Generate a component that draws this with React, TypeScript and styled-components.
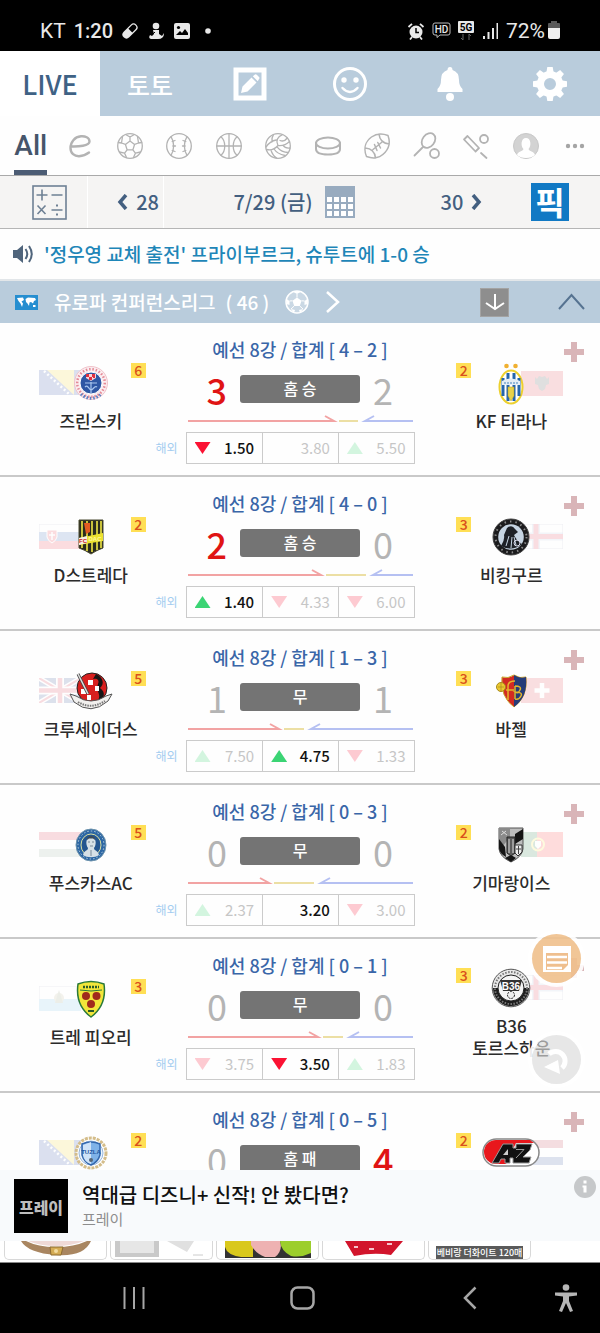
import React from 'react';
import styled, { createGlobalStyle } from 'styled-components';

const GlobalStyle = createGlobalStyle`
  * { box-sizing: border-box; }
  body { margin: 0; background: #000; font-family: 'Noto Sans CJK KR', 'Noto Sans', sans-serif; }
  button { font: inherit; color: inherit; background: none; border: 0; padding: 0; cursor: pointer; }
  h1, h2, p { margin: 0; font: inherit; }
  svg { display: block; flex: none; }
`;

/* ---------- shell ---------- */

const Screen = styled.div`
  display: flex;
  flex-direction: column;
  height: 100vh;
  background: #fefefe;
`;

const StatusBar = styled.header`
  flex: none;
  display: flex;
  justify-content: space-between;
  align-items: center;
  height: 51px;
  padding: 10px 39px 0 40px;
  background: #000;
  color: #e8e8e8;
  font: 21px/24px Roboto, sans-serif;
`;

const StatusGroup = styled.div<{ $gap: number }>`
  display: flex;
  align-items: center;
  gap: ${(p) => p.$gap}px;
`;

const Clock = styled.time`
  font-size: 20px;
  font-weight: 500;
`;

const MainNav = styled.nav`
  flex: none;
  display: grid;
  grid-template-columns: repeat(6, 1fr);
  height: 65px;
  background: #b9ccdc;
`;

const NavTab = styled.button<{ $active?: boolean }>`
  display: flex;
  align-items: center;
  justify-content: center;
  font-size: ${(p) => (p.$active ? 27 : 25)}px;
  font-weight: 500;
  line-height: 32px;
  color: ${(p) => (p.$active ? '#3f6285' : '#fff')};
  background: ${(p) => (p.$active ? '#fff' : 'transparent')};
`;

const SportNav = styled.nav`
  flex: none;
  display: grid;
  grid-template-columns: repeat(12, 1fr);
  height: 60px;
  padding-left: 6px;
  border-bottom: 1px solid #a9a9a9;
`;

const SportTab = styled.button<{ $active?: boolean }>`
  display: flex;
  align-items: center;
  justify-content: center;
  color: ${(p) => (p.$active ? '#46556b' : '#b3b3b3')};
`;

const AllLabel = styled.span`
  height: 59px;
  padding-top: 2px;
  font-family: Roboto, sans-serif;
  font-size: 28px;
  font-weight: 500;
  line-height: 56px;
  border-bottom: 5px solid #4c5c74;
`;

const DateBar = styled.section`
  flex: none;
  display: grid;
  grid-template-columns: 88px 76px 1fr 76px 100px;
  height: 53px;
  background: #f5f4f3;
  border-bottom: 1px solid #b5b5b5;
  color: #435f80;
  font-size: 20px;
  font-weight: 500;
  line-height: 28px;
`;

const DateCell = styled.button<{ $align?: string; $pad?: string; $line?: boolean }>`
  display: flex;
  align-items: center;
  justify-content: ${(p) => p.$align || 'center'};
  gap: 8px;
  padding: ${(p) => p.$pad || '0'};
  border-right: ${(p) => (p.$line ? '1px solid #fff' : '0')};
`;

const DateMain = styled(DateCell)`
  gap: 12px;
`;

const PickBadge = styled.span`
  width: 38px;
  height: 38px;
  background: #1179c4;
  color: #fff;
  font-size: 32px;
  font-weight: 700;
  line-height: 37px;
  text-align: center;
`;

const News = styled.a`
  flex: none;
  display: flex;
  align-items: center;
  gap: 10px;
  height: 52px;
  padding: 0 12px;
  border-bottom: 2px solid #e2e6e9;
  color: #1e86b8;
  font-size: 19px;
  font-weight: 500;
  line-height: 28px;
  text-decoration: none;
  white-space: nowrap;
`;

const LeagueBar = styled.section`
  flex: none;
  display: flex;
  align-items: center;
  height: 42px;
  padding: 0 15px;
  background: #b9ccdc;
  color: #fff;
`;

const LeagueName = styled.h2`
  margin: 0 10px 0 16px;
  font-size: 19px;
  font-weight: 500;
  line-height: 28px;
`;

const LeagueCount = styled.span`
  margin-right: 16px;
  font-size: 19px;
  font-weight: 500;
  line-height: 28px;
`;

const LeagueTools = styled.div`
  display: flex;
  align-items: center;
  gap: 49px;
  margin-left: auto;
`;

const SaveBox = styled.button`
  display: grid;
  place-items: center;
  width: 29px;
  height: 29px;
  background: #8e8e8e;
  border: 1px solid #a3a3a3;
`;

/* ---------- matches ---------- */

const ListWrap = styled.main`
  position: relative;
  flex: 1;
  min-height: 0;
`;

const MatchList = styled.div`
  height: 100%;
  overflow-y: auto;
  scrollbar-width: none;
`;

const MatchRow = styled.article`
  display: grid;
  grid-template-columns: 1fr 229px 1fr;
  grid-template-rows: 109px 32px;
  padding-bottom: 11px;
  border-bottom: 2px solid #c9c9c9;
`;

const TeamCell = styled.div<{ $side: 'home' | 'away' }>`
  grid-row: 1 / 3;
  grid-column: ${(p) => (p.$side === 'home' ? 1 : 3)};
  display: flex;
  flex-direction: column;
  align-items: center;
  justify-content: center;
  gap: 7px;
  padding: ${(p) => (p.$side === 'home' ? '7px 4px 0 0' : '7px 0 0 8px')};
`;

const LogoBox = styled.div`
  position: relative;
  display: grid;
  align-items: center;
  width: 104px;
  height: 40px;
  > * { grid-area: 1 / 1; }
`;

const FlagBox = styled.div<{ $side: 'home' | 'away' }>`
  justify-self: ${(p) => (p.$side === 'home' ? 'start' : 'end')};
  opacity: 0.15;
`;

const CrestBox = styled.div`
  justify-self: center;
  z-index: 1;
`;

const Rank = styled.span<{ $side: 'home' | 'away' }>`
  position: absolute;
  top: 0;
  ${(p) => (p.$side === 'home' ? 'right' : 'left')}: -3px;
  width: 15px;
  height: 15px;
  background: #ffdf55;
  color: #d9501c;
  font-size: 14px;
  font-weight: 500;
  line-height: 15px;
  text-align: center;
`;

const TeamName = styled.p`
  min-height: 22px;
  color: #2b2b2b;
  font-size: 17px;
  font-weight: 500;
  line-height: 22px;
  text-align: center;
  white-space: pre-line;
`;

const Centre = styled.div`
  grid-row: 1;
  grid-column: 2;
  display: flex;
  flex-direction: column;
  padding-top: 12px;
`;

const Stage = styled.p`
  margin-bottom: 8px;
  color: #3a66a8;
  font-size: 18px;
  font-weight: 500;
  line-height: 28px;
  text-align: center;
  white-space: nowrap;
`;

const ScoreLine = styled.div`
  display: grid;
  grid-template-columns: 1fr 120px 1fr;
  gap: 13px;
  align-items: center;
  margin-bottom: 6px;
`;

const Score = styled.span<{ $win?: boolean; $side: 'home' | 'away' }>`
  color: ${(p) => (p.$win ? '#e01414' : '#b4b4b4')};
  font-size: 36px;
  font-weight: ${(p) => (p.$win ? 500 : 400)};
  line-height: 36px;
  text-align: ${(p) => (p.$side === 'home' ? 'right' : 'left')};
`;

const Result = styled.span`
  height: 28px;
  border-radius: 3px;
  background: #747474;
  color: #fff;
  font-size: 16px;
  font-weight: 500;
  line-height: 27px;
  text-align: center;
`;

const OverseasLabel = styled.span`
  grid-row: 2;
  grid-column: 1;
  justify-self: end;
  align-self: center;
  margin-right: 8px;
  color: #a4cdf0;
  font-size: 12px;
  line-height: 16px;
`;

const Odds = styled.div`
  grid-row: 2;
  grid-column: 2;
  display: grid;
  grid-template-columns: repeat(3, 1fr);
  border: 1px solid #cbcbcb;
`;

const Odd = styled.button<{ $on: boolean }>`
  display: flex;
  align-items: center;
  justify-content: space-between;
  padding: 0 8px;
  color: ${(p) => (p.$on ? '#111' : '#c6c6c6')};
  font-size: 15px;
  font-weight: ${(p) => (p.$on ? 500 : 400)};
  line-height: 20px;
  & + & { border-left: 1px solid #cbcbcb; }
`;

const Trend = styled.i<{ $dir: '' | 'up' | 'down'; $on: boolean }>`
  width: 16px;
  height: 12px;
  background: ${(p) => (p.$dir === 'up' ? '#3bd474' : p.$dir === 'down' ? '#fb1233' : 'transparent')};
  opacity: ${(p) => (p.$on ? 1 : 0.22)};
  clip-path: ${(p) => (p.$dir === 'up' ? 'polygon(50% 0, 100% 100%, 0 100%)' : 'polygon(0 0, 100% 0, 50% 100%)')};
`;

const AddButton = styled.button`
  grid-row: 1 / 3;
  grid-column: 3;
  justify-self: end;
  align-self: start;
  margin: 18px 15px 0 0;
`;

const Floating = styled.div`
  position: absolute;
  right: 19px;
  bottom: 86px;
  z-index: 2;
  display: flex;
  flex-direction: column;
  gap: 52px;
`;

const RoundButton = styled.button<{ $tone: string }>`
  display: grid;
  place-items: center;
  width: 49px;
  height: 49px;
  border-radius: 50%;
  background: ${(p) => p.$tone};
  box-shadow: 0 0 0 4px rgba(255, 255, 255, 0.9);
`;

/* ---------- bottom ---------- */

const AdBanner = styled.aside`
  flex: none;
  display: flex;
  align-items: center;
  gap: 14px;
  height: 71px;
  padding: 0 4px 0 14px;
  background: #f8fafc;
`;

const AdLogo = styled.span`
  width: 54px;
  height: 54px;
  background: #000;
  color: #bdbdbd;
  font-size: 16px;
  font-weight: 900;
  line-height: 56px;
  text-align: center;
`;

const AdText = styled.div`
  flex: 1;
`;

const AdTitle = styled.p`
  color: #101010;
  font-size: 20px;
  font-weight: 500;
  line-height: 26px;
`;

const AdBrand = styled.p`
  color: #8d8d8d;
  font-size: 15px;
  line-height: 22px;
`;

const AdInfo = styled.button`
  align-self: flex-start;
  margin-top: 6px;
`;

const Products = styled.section`
  flex: none;
  display: flex;
  gap: 3px;
  height: 22px;
  padding: 0 4px 2px;
  border-bottom: 1px solid #888;
  background: #fff;
  overflow: hidden;
`;

const Product = styled.a`
  display: flex;
  justify-content: center;
  flex: 0 1 103px;
  height: 19px;
  border: 1px solid #d8d8d8;
  border-top: 0;
  border-radius: 0 0 5px 5px;
  overflow: hidden;
  text-decoration: none;
`;

const ProductTag = styled.span`
  align-self: flex-end;
  padding: 0 1px;
  background: #5a5a5a;
  color: #fff;
  font-size: 9px;
  font-weight: 500;
  line-height: 13px;
  white-space: nowrap;
`;

const SystemNav = styled.nav`
  flex: none;
  display: grid;
  grid-template-columns: repeat(3, 1fr) 46px;
  height: 70px;
  padding-left: 50px;
  background: #000;
`;

const SystemButton = styled.button<{ $start?: boolean }>`
  display: flex;
  align-items: center;
  justify-content: ${(p) => (p.$start ? 'flex-start' : 'center')};
`;

/* ---------- sport icons ---------- */

const SportIcon = ({ children, width = 1.3 }: { children: React.ReactNode; width?: number }) => (
  <svg width="28" height="28" viewBox="0 0 28 28" fill="none" stroke="currentColor" strokeWidth={width} strokeLinecap="round" strokeLinejoin="round">
    {children}
  </svg>
);

const sports: { name: string; icon: React.ReactNode }[] = [
  { name: 'e스포츠', icon: <SportIcon width={2.4}><path d="M5 14.500 C12 14.800 23.500 14 23.500 9.500 C23.500 5.500 19 4 15 4.300 C8.500 5 4.500 10 4.500 16 C4.500 21.500 8.500 24.300 13 24.200 C17 24 20.500 22.500 23 20.500" /></SportIcon> },
  { name: '축구', icon: <SportIcon><circle cx="14" cy="14" r="12.300" /><path d="M14 9 L18.600 12.400 L16.900 17.800 H11.100 L9.400 12.400 Z M14 9 V5 M18.600 12.400 L22.500 11 M16.900 17.800 L19.400 21.200 M11.100 17.800 L8.600 21.200 M9.400 12.400 L5.500 11 M10 2.700 L14 5 L18 2.700 M25.600 10.500 L22.500 11 L21.500 4.500 M19.400 21.200 L24.500 20 M19.400 21.200 L17.500 25.600 M8.600 21.200 L3.500 20 M8.600 21.200 L10.500 25.600 M2.400 10.500 L5.500 11 L6.500 4.500" /></SportIcon> },
  { name: '야구', icon: <SportIcon><circle cx="14" cy="14" r="12.300" /><path d="M6 4.700 C9.500 10 9.500 18 6 23.300 M22 4.700 C18.500 10 18.500 18 22 23.300" /><path d="M7.200 9.500 L10 8.500 M7.800 14 H10.500 M7.200 18.500 L10 19.500 M20.800 9.500 L18 8.500 M20.200 14 H17.500 M20.800 18.500 L18 19.500" /></SportIcon> },
  { name: '농구', icon: <SportIcon><circle cx="14" cy="14" r="12.300" /><path d="M14 1.700 V26.300 M1.700 14 H26.300 M6 4.700 C11 9 11 19 6 23.300 M22 4.700 C17 9 17 19 22 23.300" /></SportIcon> },
  { name: '배구', icon: <SportIcon><circle cx="14" cy="14" r="12.300" /><path d="M14 13.500 C11.500 9 13.500 4.500 18.500 2.600 M14 13.500 C19 14 23 12 25.500 9.500 M14 13.500 C11 17 6.500 18.500 2.600 17.500 M16 8.500 C18.500 9.500 21.500 8.500 23.300 6 M12.200 8 C8 8.500 4.500 11.500 2 15 M9.500 2.700 C8 5 7.500 7.500 8 10 M10 17 C12 20 16 22.500 21 23.500 M13 14.800 C16 18.500 20 20.500 24.300 20.500 M19 13.400 C20.500 15.500 23 16.500 26 16 M7 18.200 C8 21.500 10 24.500 13 26.200" /></SportIcon> },
  { name: '아이스하키', icon: <SportIcon width={2}><ellipse cx="14" cy="11" rx="12" ry="5.500" /><path d="M2 11 V17 C2 20.500 7 22.500 14 22.500 S26 20.500 26 17 V11" /></SportIcon> },
  { name: '미식축구', icon: <SportIcon width={1.5}><path d="M3.500 24.500 C0 16 3 9 8.500 5 C14 1 20 1.500 25 3.500 C27 9 27 15 22 20.500 C17 26 10 27 3.500 24.500 Z M16 1.900 C16.500 7.500 20 11.500 26.200 12 M2.200 16 C8.500 16.500 12 20.500 12.500 26 M10 17.500 L18.500 10.500 M11.500 12.500 L14 18.500 M14.800 10.500 L17.500 16" /></SportIcon> },
  { name: '테니스', icon: <SportIcon width={1.8}><ellipse cx="15.500" cy="8.500" rx="6" ry="8" transform="rotate(38 15.500 8.500)" /><path d="M10 15 L1.500 23.500" /><circle cx="21.500" cy="21.500" r="4.500" /></SportIcon> },
  { name: '크리켓', icon: <SportIcon width={1.8}><path d="M2 7.500 L5.500 4 L17 16 L13.500 19.500 Z M19 21 L24.500 26" /><circle cx="22" cy="7" r="4" /></SportIcon> },
  { name: '선수', icon: (
    <svg width="28" height="28" viewBox="0 0 28 28"><circle cx="14" cy="14" r="12.500" fill="#d3d3d3" stroke="#c8c8c8" /><path d="M5 23 C6 19 11 19.500 11.500 17 C8.500 14 8.800 6 14 6 S19.500 14 16.500 17 C17 19.500 22 19 23 23 C19 27 9 27 5 23 Z" fill="#fff" /></svg>
  ) },
  { name: '더보기', icon: <svg width="20" height="6" viewBox="0 0 20 6" fill="#a5a5a5"><circle cx="3" cy="3" r="2.200" /><circle cx="10" cy="3" r="2.200" /><circle cx="17" cy="3" r="2.200" /></svg> },
];

/* ---------- flags ---------- */

const flagArt: Record<string, React.ReactNode> = {
  bosnia: <><path fill="#1c3f9e" d="M0 0H42V25H0Z" /><path fill="#f7d417" d="M8 0H35V25Z" /><path d="M5 1 L30 24" stroke="#fff" strokeWidth="2.500" strokeDasharray="2 2.500" /></>,
  slovakia: <><path fill="#fff" stroke="#99b" d="M0 0H42V9H0Z" /><path fill="#2b5cb0" d="M0 8H42V17H0Z" /><path fill="#ee2436" d="M0 17H42V25H0Z" /><path fill="#ee2436" stroke="#fff" d="M8 6H18V13Q17 17 13 19Q9 17 8 13Z" /><path d="M13 8V16M10 11H16" stroke="#fff" strokeWidth="1.500" /></>,
  uk: <><path fill="#20408c" d="M0 0H42V25H0Z" /><path d="M0 0L42 25M42 0L0 25" stroke="#fff" strokeWidth="5" /><path d="M0 0L42 25M42 0L0 25" stroke="#d8203a" strokeWidth="2" /><path d="M21 0V25M0 12.500H42" stroke="#fff" strokeWidth="8" /><path d="M21 0V25M0 12.500H42" stroke="#d8203a" strokeWidth="4.500" /></>,
  hungary: <><path fill="#fff" d="M0 0H42V25H0Z" /><path fill="#d8203a" d="M0 0H42V8H0Z" /><path fill="#477050" d="M0 17H42V25H0Z" opacity=".6" /></>,
  sanmarino: <><path fill="#fff" stroke="#99b" d="M0 0H42V25H0Z" /><path fill="#6fbfe8" d="M0 13H42V25H0Z" /><circle cx="20" cy="12" r="5" fill="#b7b08a" /><path d="M16 17H24L20 4Z" fill="#8a9a70" /></>,
  albania: <><path fill="#e0303a" d="M0 0H42V25H0Z" /><path fill="#333" d="M21 6L18 5 16 8 14 6 14 13 17 14 18 18 21 20 24 18 25 14 28 13 28 6 26 8 24 5Z" /></>,
  faroe: <><path fill="#fff" stroke="#99b" d="M0 0H42V25H0Z" /><path d="M15 0V25M0 12.500H42" stroke="#3a6ab0" strokeWidth="8" opacity=".4" /><path d="M15 0V25M0 12.500H42" stroke="#e02840" strokeWidth="5" /></>,
  swiss: <><path fill="#e0303a" d="M0 0H42V25H0Z" /><path d="M21 5V20M13.500 12.500H28.500" stroke="#fff" strokeWidth="4.500" /></>,
  portugal: <><path fill="#ff2020" d="M0 0H42V25H0Z" /><path fill="#187038" d="M0 0H16V25H0Z" /><circle cx="17" cy="12.500" r="6" fill="none" stroke="#ffe830" strokeWidth="2" /><path fill="#fff" d="M14 9H20V14L17 17L14 14Z" /></>,
  netherlands: <><path fill="#fff" d="M0 0H42V25H0Z" /><path fill="#c0283a" d="M0 0H42V8H0Z" /><path fill="#2b4a9a" d="M0 17H42V25H0Z" /></>,
};

const Flag = ({ name }: { name: string }) => (
  <svg width="42" height="25" viewBox="0 0 42 25" fill="none" stroke="none">{flagArt[name]}</svg>
);

/* ---------- club crests ---------- */

const tiny = { fontFamily: 'Liberation Sans, sans-serif', fontWeight: 700, textAnchor: 'middle' as const };

const crestArt: Record<string, React.ReactNode> = {
  zrinjski: (
    <svg width="36" height="36" viewBox="0 0 36 36">
      <circle cx="18" cy="18" r="16.500" fill="#fbeef1" stroke="#f0c3ca" />
      <circle cx="18" cy="18" r="13.800" fill="none" stroke="#e48a96" strokeWidth="2.500" strokeDasharray="1.500 1.800" />
      <path d="M8 29 A14 14 0 0 0 28 29" fill="none" stroke="#5a7fc4" strokeWidth="3" strokeDasharray="1.500 1.800" />
      <circle cx="18" cy="18" r="11" fill="#2e57a4" stroke="#fff" />
      <path d="M13 9H23V13L18 16L13 13Z" fill="#f5d5da" /><path d="M13 9h3v3h-3zM19 9h3v3h-3zM16 12h3v3h-3zM20 12h2v1h-2z" fill="#e03040" />
      <path d="M12 18H24M12 22C15 19 16 25 18 25S22 20 24 22M18 17V28" stroke="#a9c7f0" fill="none" strokeWidth="1.200" />
    </svg>
  ),
  dac: (
    <svg width="26" height="36" viewBox="0 0 26 36">
      <path d="M1 1H25V29Q19 31 13 35Q7 31 1 29Z" fill="#2a2b1e" stroke="#4a4a30" />
      <path d="M4 2V29M9 2V32M14 2V33M19 2V31M23 2V29" stroke="#c9c23c" strokeWidth="2" />
      <path d="M6 4H12V13L8 15Z" fill="#e35a22" />
      <path d="M1 19L25 14V22L1 26Z" fill="#ece22e" /><path d="M1 19L9 17V24L1 26Z" fill="#f6f0e4" />
      <text x="5" y="24" fontSize="6" fill="#c22" {...tiny}>FC</text><text x="17" y="22" fontSize="6" fill="#fff7a0" {...tiny}>DAC</text>
    </svg>
  ),
  crusaders: (
    <svg width="44" height="38" viewBox="0 0 44 38">
      <circle cx="23" cy="16" r="15" fill="#d8201f" stroke="#222" />
      <path d="M27 2C34 5 36 12 31 16C37 20 36 27 28 30C34 22 26 20 29 12C31 7 27 6 24 7Z" fill="#161616" />
      <path d="M12 17h5v5h-5zM19 8h5v5h-5zM26 14h4v5h-4zM18 23h4v5h-4z" fill="#fff" />
      <path d="M9 2L19 22" stroke="#444" strokeWidth="3" /><path d="M9 2L19 22" stroke="#ddd" strokeWidth="1.500" />
      <path d="M1 22L7 24Q22 34 37 24L43 22L39 29Q22 44 5 30Z" fill="#f2f0ee" stroke="#555" /><path d="M9 30Q22 38 36 29" fill="none" stroke="#777" strokeWidth="2" strokeDasharray="1.500 1" />
    </svg>
  ),
  puskas: (
    <svg width="32" height="34" viewBox="0 0 32 34">
      <ellipse cx="16" cy="17" rx="15" ry="16" fill="#2d67a4" stroke="#6f94ad" /><ellipse cx="16" cy="17" rx="13" ry="14" fill="none" stroke="#b8cfdf" strokeDasharray="1.500 2" />
      <ellipse cx="16" cy="17" rx="10" ry="11" fill="#23558f" stroke="#d9dfa0" />
      <path d="M8 27C9 22 13 23 13 20C10 16 11 9 16 9S22 16 19 20C19 23 23 22 24 27C20 30 12 30 8 27Z" fill="#d6e0e6" /><path d="M12 12Q12 8 16 8T20 12L18 10.500H14Z" fill="#3a4a58" /><path d="M13 14h2M17 14h2M15 18h3M16 22V28" stroke="#7a8a98" />
    </svg>
  ),
  trefiori: (
    <svg width="30" height="38" viewBox="0 0 30 38">
      <path d="M2 4Q15 -1 28 4Q31 25 15 37Q-1 25 2 4Z" fill="#f2e63a" stroke="#2a7a3a" strokeWidth="1.500" />
      <path d="M4 10Q15 12 26 10" stroke="#2a7a3a" fill="none" /><path d="M7 7H23" stroke="#2a5a2a" strokeWidth="2.500" strokeDasharray="2 1" />
      <circle cx="10" cy="16" r="4" fill="#a02a1c" /><circle cx="20.500" cy="16" r="4" fill="#a02a1c" /><circle cx="15" cy="24" r="4" fill="#a02a1c" />
      <path d="M12 31H18" stroke="#2a5a2a" strokeWidth="2" />
    </svg>
  ),
  tuzla: (
    <svg width="34" height="34" viewBox="0 0 34 34">
      <circle cx="17" cy="17" r="15" fill="#fff" stroke="#d4bd8a" strokeWidth="3" strokeDasharray="3 1" />
      <circle cx="17" cy="17" r="12" fill="#eef4fb" stroke="#9ab8dc" />
      <path d="M8 8Q17 4 26 8V19Q24 26 17 29Q10 26 8 19Z" fill="#7fb2e8" stroke="#3468ae" strokeWidth="1.500" /><path d="M17 6V28Q10 26 9 19V9Z" fill="#cfe3f8" />
      <text x="17" y="18" fontSize="6" fill="#2457a0" {...tiny}>TUZLA</text><circle cx="17" cy="24" r="2" fill="#567" />
    </svg>
  ),
  tirana: (
    <svg width="26" height="42" viewBox="0 0 26 42">
      <circle cx="8.500" cy="3" r="2.300" fill="#f0b030" /><circle cx="17.500" cy="3" r="2.300" fill="#f0b030" />
      <ellipse cx="13" cy="24" rx="11.500" ry="16.500" fill="#fff" stroke="#ecd02e" strokeWidth="2" />
      <path d="M5 15V33M10 10V38M16 10V38M21 15V33" stroke="#2566ac" strokeWidth="3" /><path d="M4 18Q13 13 22 18V22H4Z" fill="#e3edf5" /><path d="M6 20H20" stroke="#7aa6d0" strokeDasharray="2 1" strokeWidth="1.500" />
      <path d="M10 24H16V33L13 38L10 33Z" fill="#e8d24a" stroke="#b59b20" strokeWidth=".5" />
    </svg>
  ),
  vikingur: (
    <svg width="38" height="38" viewBox="0 0 38 38">
      <circle cx="19" cy="19" r="18" fill="#1b1b1d" stroke="#444" /><circle cx="19" cy="19" r="15.500" fill="none" stroke="#8a8a8a" strokeWidth="2" strokeDasharray="1.500 4" />
      <circle cx="19" cy="19" r="12.800" fill="#c6d4e2" />
      <path d="M9 28Q13 22 12 17L15 10Q20 6 23 11L26 14L22 17Q24 22 30 26Q20 34 9 28Z" fill="#1d2026" /><path d="M14 28L17 18M19 30L20 19M24 27L22 19" stroke="#c6d4e2" strokeWidth="1" /><circle cx="25" cy="25" r="3" fill="none" stroke="#dde" />
    </svg>
  ),
  basel: (
    <svg width="34" height="34" viewBox="0 0 34 34">
      <path d="M8 3Q14 5 20 1Q26 5 32 3Q34 23 20 33Q6 23 8 3Z" fill="#d22a22" stroke="#c9a82e" /><path d="M20 1Q26 5 32 3Q34 23 20 33Z" fill="#263c78" />
      <path d="M14 26V12Q14 7 21 7M12 16H20M21 12V25M21 12Q28 12 26 16T21 18Q29 18 27 22T21 25" fill="none" stroke="#e3b52d" strokeWidth="1.500" />
      <circle cx="7" cy="13" r="4.500" fill="#ecc92f" stroke="#a78a20" /><path d="M4 13H10M7 9V17" stroke="#a78a20" strokeWidth=".7" />
    </svg>
  ),
  guimaraes: (
    <svg width="26" height="36" viewBox="0 0 26 36">
      <path d="M1 1H25V22Q24 30 13 35Q2 30 1 22Z" fill="#bdbdbd" stroke="#555" /><path d="M1 1H12V10L1 24Z" fill="#8a8a8a" /><path d="M1 12L7 20 8 30Q1 26 1 21ZM25 2V12L17 17V7ZM7 31L13 28 18 31 13 35Z" fill="#151515" />
      <path d="M9 10H17V26L13 29L9 26Z" fill="#5d5d5d" stroke="#222" /><path d="M11 12V26M15 12V26M4 4L9 8M3 8L8 4" stroke="#ddd" /><path d="M17 18H24V25L20 29L17 26Z" fill="#eee" stroke="#333" /><path d="M20.500 19V27M18 22H23" stroke="#444" />
    </svg>
  ),
  b36: (
    <svg width="40" height="40" viewBox="0 0 40 40">
      <circle cx="20" cy="20" r="18.800" fill="#e8e8e8" stroke="#555" /><path d="M2 20A18 18 0 0 0 38 20Z" fill="#1d1d1d" /><circle cx="20" cy="20" r="16" fill="none" stroke="#777" strokeWidth="2" strokeDasharray="1.500 1.500" />
      <circle cx="20" cy="20" r="13" fill="#f5f5f5" stroke="#222" /><path d="M9 12H31L28 23H12Z" fill="#333" /><text x="20" y="21.500" fontSize="10" fill="#fff" {...tiny}>B36</text><circle cx="20" cy="27" r="3.500" fill="#eee" stroke="#222" strokeDasharray="2 1" />
    </svg>
  ),
  az: (
    <svg width="58" height="30" viewBox="0 0 58 30">
      <rect x="1" y="1" width="56" height="27" rx="13.500" fill="#fff" stroke="#888" strokeWidth="1.500" /><path d="M14 2H48L52 5H34L24 26H14A12 12 0 0 1 14 2Z" fill="#e8171c" />
      <path d="M10 25L21 6H31V10H34V6H50L48 12L41 19H49L47 25H31V20H28V25H23V21H19L17 25Z" fill="#111" stroke="#999" strokeWidth="1" /><path d="M21 17L26 11V17Z" fill="#ccc" /><path d="M34 11.500H42L34 20" fill="none" stroke="#999" />
    </svg>
  ),
};

/* ---------- data ---------- */

type Team = { name?: string; flag: string; crest: string; rank: number; score: number; win?: boolean };
type OddItem = { dir: '' | 'up' | 'down'; value: string; on?: boolean };
type Match = { id: number; total: string; result: string; home: Team; away: Team; bar?: [number, number]; odds?: OddItem[] };

const matches: Match[] = [
  {
    id: 1, total: '4 – 2', result: '홈 승', bar: [148, 175],
    home: { name: '즈린스키', flag: 'bosnia', crest: 'zrinjski', rank: 6, score: 3, win: true },
    away: { name: 'KF 티라나', flag: 'albania', crest: 'tirana', rank: 2, score: 2 },
    odds: [{ dir: 'down', value: '1.50', on: true }, { dir: '', value: '3.80' }, { dir: 'up', value: '5.50' }],
  },
  {
    id: 2, total: '4 – 0', result: '홈 승', bar: [135, 183],
    home: { name: 'D스트레다', flag: 'slovakia', crest: 'dac', rank: 2, score: 2, win: true },
    away: { name: '비킹구르', flag: 'faroe', crest: 'vikingur', rank: 3, score: 0 },
    odds: [{ dir: 'up', value: '1.40', on: true }, { dir: 'down', value: '4.33' }, { dir: 'down', value: '6.00' }],
  },
  {
    id: 3, total: '1 – 3', result: '무', bar: [93, 121],
    home: { name: '크루세이더스', flag: 'uk', crest: 'crusaders', rank: 5, score: 1 },
    away: { name: '바젤', flag: 'swiss', crest: 'basel', rank: 3, score: 1 },
    odds: [{ dir: 'up', value: '7.50' }, { dir: 'up', value: '4.75', on: true }, { dir: 'down', value: '1.33' }],
  },
  {
    id: 4, total: '0 – 3', result: '무', bar: [83, 131],
    home: { name: '푸스카스AC', flag: 'hungary', crest: 'puskas', rank: 5, score: 0 },
    away: { name: '기마랑이스', flag: 'portugal', crest: 'guimaraes', rank: 2, score: 0 },
    odds: [{ dir: 'up', value: '2.37' }, { dir: '', value: '3.20', on: true }, { dir: 'down', value: '3.00' }],
  },
  {
    id: 5, total: '0 – 1', result: '무', bar: [132, 160],
    home: { name: '트레 피오리', flag: 'sanmarino', crest: 'trefiori', rank: 3, score: 0 },
    away: { name: 'B36\n토르스하운', flag: 'faroe', crest: 'b36', rank: 3, score: 0 },
    odds: [{ dir: 'down', value: '3.75' }, { dir: 'down', value: '3.50', on: true }, { dir: 'up', value: '1.83' }],
  },
  {
    id: 6, total: '0 – 5', result: '홈 패',
    home: { flag: 'bosnia', crest: 'tuzla', rank: 2, score: 0 },
    away: { flag: 'netherlands', crest: 'az', rank: 2, score: 4, win: true },
  },
];

const TeamBlock = ({ team, side }: { team: Team; side: 'home' | 'away' }) => (
  <TeamCell $side={side}>
    <LogoBox>
      <FlagBox $side={side}><Flag name={team.flag} /></FlagBox>
      <CrestBox>{crestArt[team.crest]}</CrestBox>
      <Rank $side={side}>{team.rank}</Rank>
    </LogoBox>
    <TeamName>{team.name}</TeamName>
  </TeamCell>
);

/* Win / draw / loss shares as a red arrow, a yellow bar and a blue arrow */
const ShareBar = ({ bar: [red, blue] }: { bar: [number, number] }) => (
  <svg width="229" height="10" viewBox="0 0 229 10" fill="none" strokeWidth="2">
    <path d={`M2 8H${red}L${red - 9} 3`} stroke="#f2a3a3" />
    <path d={`M${red + 5} 8H${blue - 3}`} stroke="#ecdfa4" />
    <path d={`M227 8H${blue + 4}L${blue + 13} 3`} stroke="#b5c0f2" />
  </svg>
);

const MatchCard = ({ match }: { match: Match }) => (
  <MatchRow>
    <TeamBlock team={match.home} side="home" />
    <Centre>
      <Stage>예선 8강 / 합계 [ {match.total} ]</Stage>
      <ScoreLine>
        <Score $side="home" $win={match.home.win}>{match.home.score}</Score>
        <Result>{match.result}</Result>
        <Score $side="away" $win={match.away.win}>{match.away.score}</Score>
      </ScoreLine>
      {match.bar && <ShareBar bar={match.bar} />}
    </Centre>
    {match.odds && (
      <>
        <OverseasLabel>해외</OverseasLabel>
        <Odds>
          {match.odds.map((o) => (
            <Odd key={o.value} $on={!!o.on}><Trend $dir={o.dir} $on={!!o.on} />{o.value}</Odd>
          ))}
        </Odds>
      </>
    )}
    <TeamBlock team={match.away} side="away" />
    <AddButton aria-label="관심 경기 추가">
      <svg width="22" height="22" viewBox="0 0 22 22"><path d="M8 1H14V8H21V14H14V21H8V14H1V8H8Z" fill="#d9b5b8" /></svg>
    </AddButton>
  </MatchRow>
);

export default function App() {
  return (
    <Screen>
      <GlobalStyle />
      <StatusBar>
        <StatusGroup $gap={8}>
          <span>KT</span>
          <Clock>1:20</Clock>
          <svg width="18" height="18" viewBox="0 0 18 18"><g transform="rotate(-45 9 9)"><rect x="0" y="5" width="18" height="8" rx="4" fill="#e8e8e8" /><path d="M9.500 6.300H14A2.700 2.700 0 0 1 14 11.700H9.500Z" fill="#000" /></g></svg>
          <svg width="18" height="18" viewBox="0 0 18 18" fill="#e8e8e8"><circle cx="9" cy="4" r="3.300" /><path d="M6 8H12L12 12L15 14L17 11Q17 17 11 17H4Q1 16 3 13L5 14L7 12Z" /><path d="M5 13L8 10" stroke="#000" /></svg>
          <svg width="18" height="18" viewBox="0 0 18 18"><rect x="1" y="1" width="16" height="16" rx="2" fill="#e8e8e8" /><circle cx="5.500" cy="5.500" r="1.600" fill="#000" /><path d="M3 13L7 9L9 11L12 7L15 11V13Z" fill="#000" /></svg>
          <svg width="18" height="6" viewBox="0 0 18 6"><circle cx="9" cy="3" r="2.800" fill="#e8e8e8" /></svg>
        </StatusGroup>
        <StatusGroup $gap={7}>
          <svg width="18" height="18" viewBox="0 0 18 18"><circle cx="9" cy="10" r="6.500" fill="#e8e8e8" /><path d="M9 6V10.500H12" stroke="#000" strokeWidth="1.500" fill="none" /><path d="M1.500 5L5 1.800M16.500 5L13 1.800M3 17.500L5 15M15 17.500L13 15" stroke="#e8e8e8" strokeWidth="1.800" /></svg>
          <svg width="19" height="17" viewBox="0 0 19 17"><path d="M3 1H16Q18 1 18 3V11Q18 13 16 13H8L5 15.500V13H3Q1 13 1 11V3Q1 1 3 1Z" fill="none" stroke="#bbb" /><text x="9.500" y="11" fontSize="10" fontWeight="500" fontFamily="Roboto" textAnchor="middle" fill="#e8e8e8">HD</text></svg>
          <svg width="16" height="20" viewBox="0 0 16 20"><rect width="16" height="12" rx="1" fill="#e8e8e8" /><text x="8" y="10" fontSize="10" fontWeight="700" fontFamily="Roboto" textAnchor="middle" fill="#000">5G</text><path d="M5 13V19L3 17M11 19V13L13 15" stroke="#666" fill="none" /></svg>
          <svg width="18" height="18" viewBox="0 0 18 18" fill="#e8e8e8"><path d="M2 14h2v3h-2zM6.500 10h2v7h-2zM11 6h2v11h-2z" /><path d="M15.500 1h1.500v16h-1.500z" /></svg>
          <StatusGroup $gap={2}>
            <span>72%</span>
            <svg width="14" height="19" viewBox="0 0 14 19"><path d="M4 0H10V2H12Q13 2 13 3V8H1V3Q1 2 2 2H4Z" fill="#5a5a5a" /><path d="M1 7H13V16Q13 18 11 18H3Q1 18 1 16Z" fill="#f0f0f0" /></svg>
          </StatusGroup>
        </StatusGroup>
      </StatusBar>

      <MainNav>
        <NavTab $active>LIVE</NavTab>
        <NavTab>토토</NavTab>
        <NavTab aria-label="글쓰기">
          <svg width="34" height="34" viewBox="0 0 34 34"><rect x="3" y="3" width="28" height="28" fill="none" stroke="#fff" strokeWidth="5" /><path d="M8 26L9.500 19.500L18.500 10.500L23.500 15.500L14.500 24.500ZM19.800 9.200L22 7.500Q23 7 24 8L26 10Q27 11 26 12L24.800 14.200Z" fill="#fff" /></svg>
        </NavTab>
        <NavTab aria-label="커뮤니티">
          <svg width="36" height="36" viewBox="0 0 36 36" fill="none" stroke="#fff" strokeWidth="3"><circle cx="18" cy="18" r="15.500" /><path d="M10.500 22Q18 30 25.500 22" strokeLinecap="round" strokeWidth="2.400" /><circle cx="12" cy="14" r="2.700" fill="#fff" stroke="none" /><circle cx="24" cy="14" r="2.700" fill="#fff" stroke="none" /></svg>
        </NavTab>
        <NavTab aria-label="알림">
          <svg width="28" height="36" viewBox="0 0 28 36" fill="#fff"><path d="M14 1Q16.500 1 16.500 4Q23 6 23 14Q23 20 26.500 23V26H1.500V23Q5 20 5 14Q5 6 11.500 4Q11.500 1 14 1Z" /><circle cx="14" cy="31" r="4" /></svg>
        </NavTab>
        <NavTab aria-label="설정">
          <svg width="36" height="36" viewBox="0 0 36 36"><circle cx="18" cy="18" r="9.500" fill="none" stroke="#fff" strokeWidth="7" /><g fill="#fff">{[0, 45, 90, 135, 180, 225, 270, 315].map((a) => <path key={a} d="M14.300 7L15.300 1H20.700L21.700 7Z" transform={`rotate(${a} 18 18)`} />)}</g></svg>
        </NavTab>
      </MainNav>

      <SportNav>
        <SportTab $active><AllLabel>All</AllLabel></SportTab>
        {sports.map((s) => <SportTab key={s.name} aria-label={s.name}>{s.icon}</SportTab>)}
      </SportNav>

      <DateBar>
        <DateCell $line $pad="0 0 0 12px" aria-label="계산기">
          <svg width="35" height="35" viewBox="0 0 35 35" fill="none" stroke="#6e8094" strokeWidth="1.600"><rect x="1" y="1" width="33" height="33" /><path d="M4.500 10H15.500M10 4.500V15.500M19.500 10H30.500M5.500 20.500L13.500 29M13.500 20.500L5.500 29M19.500 25H30.500" /><path d="M24 20.500h2M24 29.500h2" strokeWidth="2" /></svg>
        </DateCell>
        <DateCell $line $align="flex-end" $pad="0 4px 0 0">
          <svg width="12" height="16" viewBox="0 0 12 16"><path d="M10 1L4 8L10 15" fill="none" stroke="#435f80" strokeWidth="3.500" /></svg>28
        </DateCell>
        <DateMain>
          7/29 (금)
          <svg width="30" height="32" viewBox="0 0 30 32"><path d="M0 0H30V32H0Z" fill="#98abbf" /><path fill="#fff" d="M2 11h5v5h-5zM9 11h5v5h-5zM16 11h5v5h-5zM23 11h5v5h-5zM2 18h5v5h-5zM9 18h5v5h-5zM16 18h5v5h-5zM23 18h5v5h-5zM2 25h5v5h-5zM9 25h5v5h-5zM16 25h5v5h-5zM23 25h5v5h-5z" /></svg>
        </DateMain>
        <DateCell>
          30<svg width="12" height="16" viewBox="0 0 12 16"><path d="M2 1L8 8L2 15" fill="none" stroke="#435f80" strokeWidth="3.500" /></svg>
        </DateCell>
        <DateCell><PickBadge>픽</PickBadge></DateCell>
      </DateBar>

      <News href="#news">
        <svg width="22" height="20" viewBox="0 0 22 20" fill="#50657c"><path d="M1 6H5L11 1V19L5 14H1Z" /><path d="M13.500 5Q17 10 13.500 15M17 2Q22.500 10 17 18" fill="none" stroke="#50657c" strokeWidth="2" /></svg>
        '정우영 교체 출전' 프라이부르크, 슈투트에 1-0 승
      </News>

      <LeagueBar>
        <svg width="23" height="15" viewBox="0 0 23 15"><path d="M0 0H23V15H0Z" fill="#268ed0" /><path d="M2 3L8 2.500L9 5L6.500 6.500L8 8.500L7 12L5.500 8.500L3.500 6ZM10.500 4L13 2.500L20 3L21 5L19 6L18 8.500L16 7L14.500 7.500L14 11L12.500 8.500L11 7ZM18 10H20.500V12H18Z" fill="#fff" /></svg>
        <LeagueName>유로파 컨퍼런스리그</LeagueName>
        <LeagueCount>( 46 )</LeagueCount>
        <svg width="24" height="24" viewBox="0 0 24 24"><circle cx="12" cy="12" r="11" fill="#cad8e4" stroke="#fff" strokeWidth="1.500" /><path d="M12 7.500L16.500 10.800L14.800 16H9.200L7.500 10.800ZM8.500 2L12 4L15.500 2L12 1ZM1.500 9L4.500 11V15L1.500 14ZM22.500 9L19.500 11V15L22.500 14ZM6 19L10 20L9 23ZM18 19L14 20L15 23Z" fill="#fff" /><path d="M12 7.500V4M16.500 10.800L19.500 11M14.800 16L18 19M9.200 16L6 19M7.500 10.800L4.500 11" stroke="#fff" /></svg>
        <svg width="32" height="24" viewBox="0 0 32 24"><path d="M18 2L29 12L18 22" fill="none" stroke="#fff" strokeWidth="2.500" /></svg>
        <LeagueTools>
          <SaveBox aria-label="내려받기"><svg width="20" height="18" viewBox="0 0 20 18"><path d="M10 1V16M1 10L10 16L19 10" fill="none" stroke="#fff" strokeWidth="2" /></svg></SaveBox>
          <button aria-label="접기"><svg width="27" height="18" viewBox="0 0 27 18"><path d="M1 16L13.500 2L26 16" fill="none" stroke="#567391" strokeWidth="2" /></svg></button>
        </LeagueTools>
      </LeagueBar>

      <ListWrap>
        <MatchList>
          {matches.map((m) => <MatchCard key={m.id} match={m} />)}
        </MatchList>
        <Floating>
          <RoundButton $tone="rgba(240, 192, 140, 0.9)" aria-label="경기 메모">
            <svg width="30" height="28" viewBox="0 0 30 28"><path d="M1 1H29V27H1Z" fill="#fff" /><path d="M4 8H26V20L21 25H4Z" fill="#efbf8e" /><path d="M5 12H25M5 17.500H25M5 23H20" stroke="#fff" strokeWidth="2.500" /></svg>
          </RoundButton>
          <RoundButton $tone="rgba(218, 218, 218, 0.65)" aria-label="새로고침">
            <svg width="34" height="34" viewBox="0 0 34 34"><path d="M9 11A9.500 9.500 0 1 1 22 25" fill="none" stroke="#fff" strokeWidth="5" /><path d="M4 24L18 17L20 31Z" fill="#fff" /></svg>
          </RoundButton>
        </Floating>
      </ListWrap>

      <AdBanner>
        <AdLogo>프레이</AdLogo>
        <AdText>
          <AdTitle>역대급 디즈니+ 신작! 안 봤다면?</AdTitle>
          <AdBrand>프레이</AdBrand>
        </AdText>
        <AdInfo aria-label="광고 정보">
          <svg width="22" height="22" viewBox="0 0 22 22"><circle cx="11" cy="11" r="11" fill="#c6c8ca" /><path d="M9.500 4.500h3v3h-3zM8.500 9.500h4v7h-3v-5h-1z" fill="#fff" /></svg>
        </AdInfo>
      </AdBanner>

      <Products>
        <Product href="#belt" aria-label="팔찌">
          <svg width="72" height="18" viewBox="0 0 72 18"><path d="M1 0Q8 12 36 14T71 0L67 0Q54 6 36 6T6 0Z" fill="#a98661" /><path d="M8 0Q20 5 36 5T64 0Z" fill="#efd9d6" /><path d="M30 6H43L41 14H31Z" fill="#d4ac55" stroke="#8e6b30" /><circle cx="36" cy="10" r="2" fill="#f3dca0" /></svg>
        </Product>
        <Product href="#frame" aria-label="액자">
          <svg width="94" height="18" viewBox="0 0 94 18"><path d="M0 0H44V16H0Z" fill="#c9c9c9" /><path d="M5 0H39V12H5Z" fill="#e6e6e6" /><path d="M52 0H79L72 11Z" fill="#e0e0e0" /><path d="M78 14H88" stroke="#ccc" /></svg>
        </Product>
        <Product href="#macaron" aria-label="마카롱">
          <svg width="86" height="18" viewBox="0 0 86 18"><path d="M0 0H86V17H0Z" fill="#333" /><path d="M0 0H28V16H16Q2 14 0 6Z" fill="#d9c81c" /><path d="M26 0H55Q58 10 50 16H40Q30 12 26 4Z" fill="#eeb2b2" /><path d="M55 0H86V12Q76 17 66 15Q56 10 55 0Z" fill="#9cce2c" /></svg>
        </Product>
        <Product href="#bandana" aria-label="스카프">
          <svg width="60" height="18" viewBox="0 0 60 18"><path d="M1 0H59L47 14Q30 11 10 15Z" fill="#d2152c" /><path d="M10 5h4v2h-4zM25 7h5v2h-5zM43 2h5v2h-5z" fill="#f6c3cb" /></svg>
        </Product>
        <Product href="#wipes"><ProductTag>베비랑 더화이트 120매</ProductTag></Product>
      </Products>

      <SystemNav>
        <SystemButton aria-label="최근 앱"><svg width="22" height="22" viewBox="0 0 22 22"><path d="M1.500 0V22M11 0V22M20.500 0V22" stroke="#a6a6a6" strokeWidth="2" /></svg></SystemButton>
        <SystemButton aria-label="홈"><svg width="25" height="24" viewBox="0 0 25 24"><rect x="1.500" y="1.500" width="22" height="21" rx="6" fill="none" stroke="#a6a6a6" strokeWidth="2.500" /></svg></SystemButton>
        <SystemButton aria-label="뒤로"><svg width="14" height="24" viewBox="0 0 14 24"><path d="M12.500 1.500L2 12L12.500 22.500" fill="none" stroke="#a6a6a6" strokeWidth="2.500" /></svg></SystemButton>
        <SystemButton $start aria-label="접근성"><svg width="24" height="28" viewBox="0 0 24 28" fill="#b6b6b6"><circle cx="12" cy="3.500" r="3.300" /><path d="M1 8.500H23V11.500L15 12.500V17L19 27L16 28L12 19L8 28L5 27L9 17V12.500L1 11.500Z" /></svg></SystemButton>
      </SystemNav>
    </Screen>
  );
}
